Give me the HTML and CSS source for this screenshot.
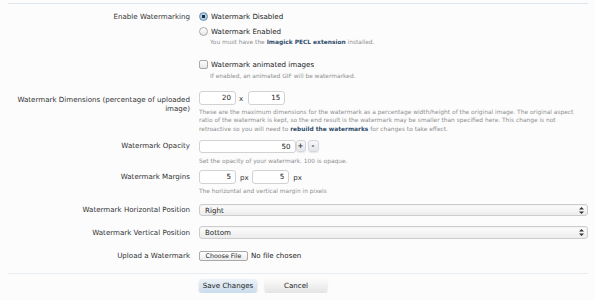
FILE: index.html
```html
<!DOCTYPE html>
<html>
<head>
<meta charset="utf-8">
<link rel="stylesheet" href="styles.css">
</head>
<body>
<div class="form">
  <div class="rule"></div>

  <dl class="row row-enable">
    <dt>Enable Watermarking</dt>
    <dd>
      <ul class="choices">
        <li><span class="radio checked"></span>Watermark Disabled</li>
        <li class="second"><span class="radio"></span>Watermark Enabled
          <p class="hint hint-first">You must have the <a>Imagick PECL extension</a> installed.</p>
        </li>
      </ul>
      <ul class="choices checks">
        <li><span class="checkbox"></span>Watermark animated images
          <p class="hint hint-first">If enabled, an animated GIF will be watermarked.</p>
        </li>
      </ul>
    </dd>
  </dl>

  <dl class="row row-dims">
    <dt class="two-line">Watermark Dimensions (percentage of uploaded image)</dt>
    <dd>
      <div class="inline">
        <span class="input small">20</span>
        <span class="sep">x</span>
        <span class="input small">15</span>
      </div>
      <p class="hint hint-desc"><span>These are the maximum dimensions for the watermark as a percentage width/height of the original image. The original aspect ratio of the watermark is kept, so the end result is the watermark may be smaller than specified here. This change is not</span> <span>retroactive so you will need to</span> <a>rebuild the watermarks</a> <span>for changes to take effect.</span></p>
    </dd>
  </dl>

  <dl class="row row-opacity">
    <dt class="short">Watermark Opacity</dt>
    <dd>
      <div class="inline">
        <span class="input wide">50</span>
        <span class="spin plus">+</span>
        <span class="spin minus">-</span>
      </div>
      <p class="hint hint-op">Set the opacity of your watermark. 100 is opaque.</p>
    </dd>
  </dl>

  <dl class="row row-margins">
    <dt>Watermark Margins</dt>
    <dd>
      <div class="inline">
        <span class="input small m1">5</span>
        <span class="unit">px</span>
        <span class="input small m2">5</span>
        <span class="unit">px</span>
      </div>
      <p class="hint hint-m">The horizontal and vertical margin in pixels</p>
    </dd>
  </dl>

  <dl class="row row-hpos">
    <dt class="sel-label">Watermark Horizontal Position</dt>
    <dd>
      <div class="select"><span>Right</span>
        <svg class="arrows" width="5" height="7" viewBox="0 0 5 7"><path d="M2.5 0 L5 2.6 H0 Z M2.5 7 L5 4.4 H0 Z" fill="#333"/></svg>
      </div>
    </dd>
  </dl>

  <dl class="row row-vpos">
    <dt class="sel-label">Watermark Vertical Position</dt>
    <dd>
      <div class="select"><span>Bottom</span>
        <svg class="arrows" width="5" height="7" viewBox="0 0 5 7"><path d="M2.5 0 L5 2.6 H0 Z M2.5 7 L5 4.4 H0 Z" fill="#333"/></svg>
      </div>
    </dd>
  </dl>

  <dl class="row row-upload">
    <dt class="up-label">Upload a Watermark</dt>
    <dd>
      <div class="inline">
        <span class="file-btn">Choose File</span>
        <span class="file-name">No file chosen</span>
      </div>
    </dd>
  </dl>

  <div class="rule rule-bottom"></div>

  <div class="buttons">
    <span class="btn primary">Save Changes</span>
    <span class="btn">Cancel</span>
  </div>
</div>
</body>
</html>
```

FILE: styles.css
```css
html, body {
  margin: 0;
  padding: 0;
  background: #fcfcfd;
}

body {
  font-family: "DejaVu Sans", "Noto Sans", sans-serif;
  font-size: 7.1px;
  color: #333;
}

.form {
  padding: 0 7px 0 8px;
}

.rule {
  margin-top: 3px;
  border-top: 1px solid #dfe7ee;
}

.rule-bottom {
  margin-top: 12.5px;
  border-top-color: #e8edf2;
}

.row {
  display: grid;
  grid-template-columns: 182px 1fr;
  column-gap: 9px;
  margin: 0;
}

.row dt {
  text-align: right;
  line-height: 10px;
  color: #333;
}

.row dd {
  margin: 0;
}

.row-enable { margin-top: 7.7px; }
.row-dims { margin-top: 11px; }
.row-opacity { margin-top: 6px; }
.row-margins { margin-top: 5px; }
.row-hpos { margin-top: 8px; }
.row-vpos { margin-top: 10px; }
.row-upload { margin-top: 12px; }

.two-line {
  line-height: 9.5px !important;
  padding-top: 3.3px;
}

.short { padding-top: 1.5px; }
.row-margins dt { padding-top: 2px; }
.sel-label { padding-top: 1.3px; }
.up-label { padding-top: 0; }

.choices {
  list-style: none;
  margin: 0;
  padding: 0;
}

.choices li {
  line-height: 10px;
  color: #222;
}

.choices .second {
  margin-top: 5.3px;
}

.checks {
  margin-top: 13.8px;
}

.radio {
  display: inline-block;
  width: 7px;
  height: 7px;
  border: 1px solid #a9a9a9;
  border-radius: 50%;
  background: linear-gradient(#ffffff, #e6e6e6);
  vertical-align: -2px;
  margin-right: 3px;
  box-sizing: content-box;
}

.radio.checked {
  border-color: #6f8fae;
  background: radial-gradient(circle, #1c2a3a 0 1.4px, #b9d3ec 1.8px, #8fb6dc 100%);
}

.checkbox {
  display: inline-block;
  width: 7px;
  height: 7px;
  border: 1px solid #a9a9a9;
  border-radius: 2px;
  background: linear-gradient(#ffffff, #e6e6e6);
  vertical-align: -2px;
  margin-right: 3px;
}

.hint {
  margin: 0;
  font-size: 5.9px;
  line-height: 8.6px;
  color: #8f8f8f;
}

.hint a {
  color: #2f4c6b;
  font-weight: bold;
}

.hint-first {
  margin-top: 1px;
  padding-left: 11px;
}

.checks .hint-first { margin-top: 1.5px; }

.hint-desc { margin-top: 2.4px; }
.hint-op { margin-top: 4.2px; }
.hint-m { margin-top: 2.75px; }

.inline {
  display: flex;
  align-items: center;
}

.input {
  display: block;
  box-sizing: border-box;
  height: 14px;
  line-height: 12px;
  border: 1px solid #d2d2d2;
  border-radius: 3px;
  background: #fff;
  text-align: right;
  padding-right: 4px;
  color: #222;
}

.input.small { width: 37px; }
.input.wide { width: 96.5px; height: 13px; line-height: 11px; }

.sep {
  margin: 0 5px 0 3px;
  color: #333;
}

.unit {
  margin: 0 3.5px 0 4px;
  color: #333;
}

.spin {
  display: block;
  box-sizing: border-box;
  width: 10px;
  height: 12px;
  line-height: 11px;
  text-align: center;
  border: 1px solid #d4d6da;
  border-radius: 3px;
  background: linear-gradient(#f7f8fa, #e2e5ea);
  box-shadow: 0 1px 1px rgba(0,0,0,0.08);
  font-weight: bold;
  font-size: 7px;
  color: #333;
}

.spin.plus { margin-left: 0; }
.spin.minus { margin-left: 2px; width: 11px; }

.select {
  display: flex;
  align-items: center;
  justify-content: space-between;
  box-sizing: border-box;
  height: 12.5px;
  padding: 0 3px 0 5px;
  border: 1px solid #cdcdcd;
  border-radius: 3px;
  background: linear-gradient(#fdfdfd, #ececec);
  box-shadow: inset 0 1px 1px rgba(0,0,0,0.04);
  color: #1e1e1e;
}

.arrows {
  display: block;
}

.file-btn {
  display: block;
  box-sizing: border-box;
  width: 49px;
  height: 10px;
  line-height: 8px;
  font-size: 6.3px;
  text-align: center;
  border: 1px solid #a9a9a9;
  border-radius: 2px;
  background: linear-gradient(#ffffff, #ececec);
  color: #222;
}

.file-name {
  margin-left: 3px;
  color: #222;
}

.buttons {
  display: flex;
  gap: 8px;
  margin-top: 5px;
  padding-left: 191px;
}

.btn {
  display: block;
  box-sizing: border-box;
  width: 60px;
  height: 13.5px;
  line-height: 13.5px;
  text-align: center;
  border-radius: 4px;
  background: linear-gradient(#fbfbfb, #e4e4e6);
  box-shadow: 0 1px 2px rgba(0,0,0,0.18);
  color: #222;
}

.btn.primary {
  width: 58px;
  background: linear-gradient(#edf3f9, #c9dbec);
}

.btn + .btn { width: 62px; }
```
